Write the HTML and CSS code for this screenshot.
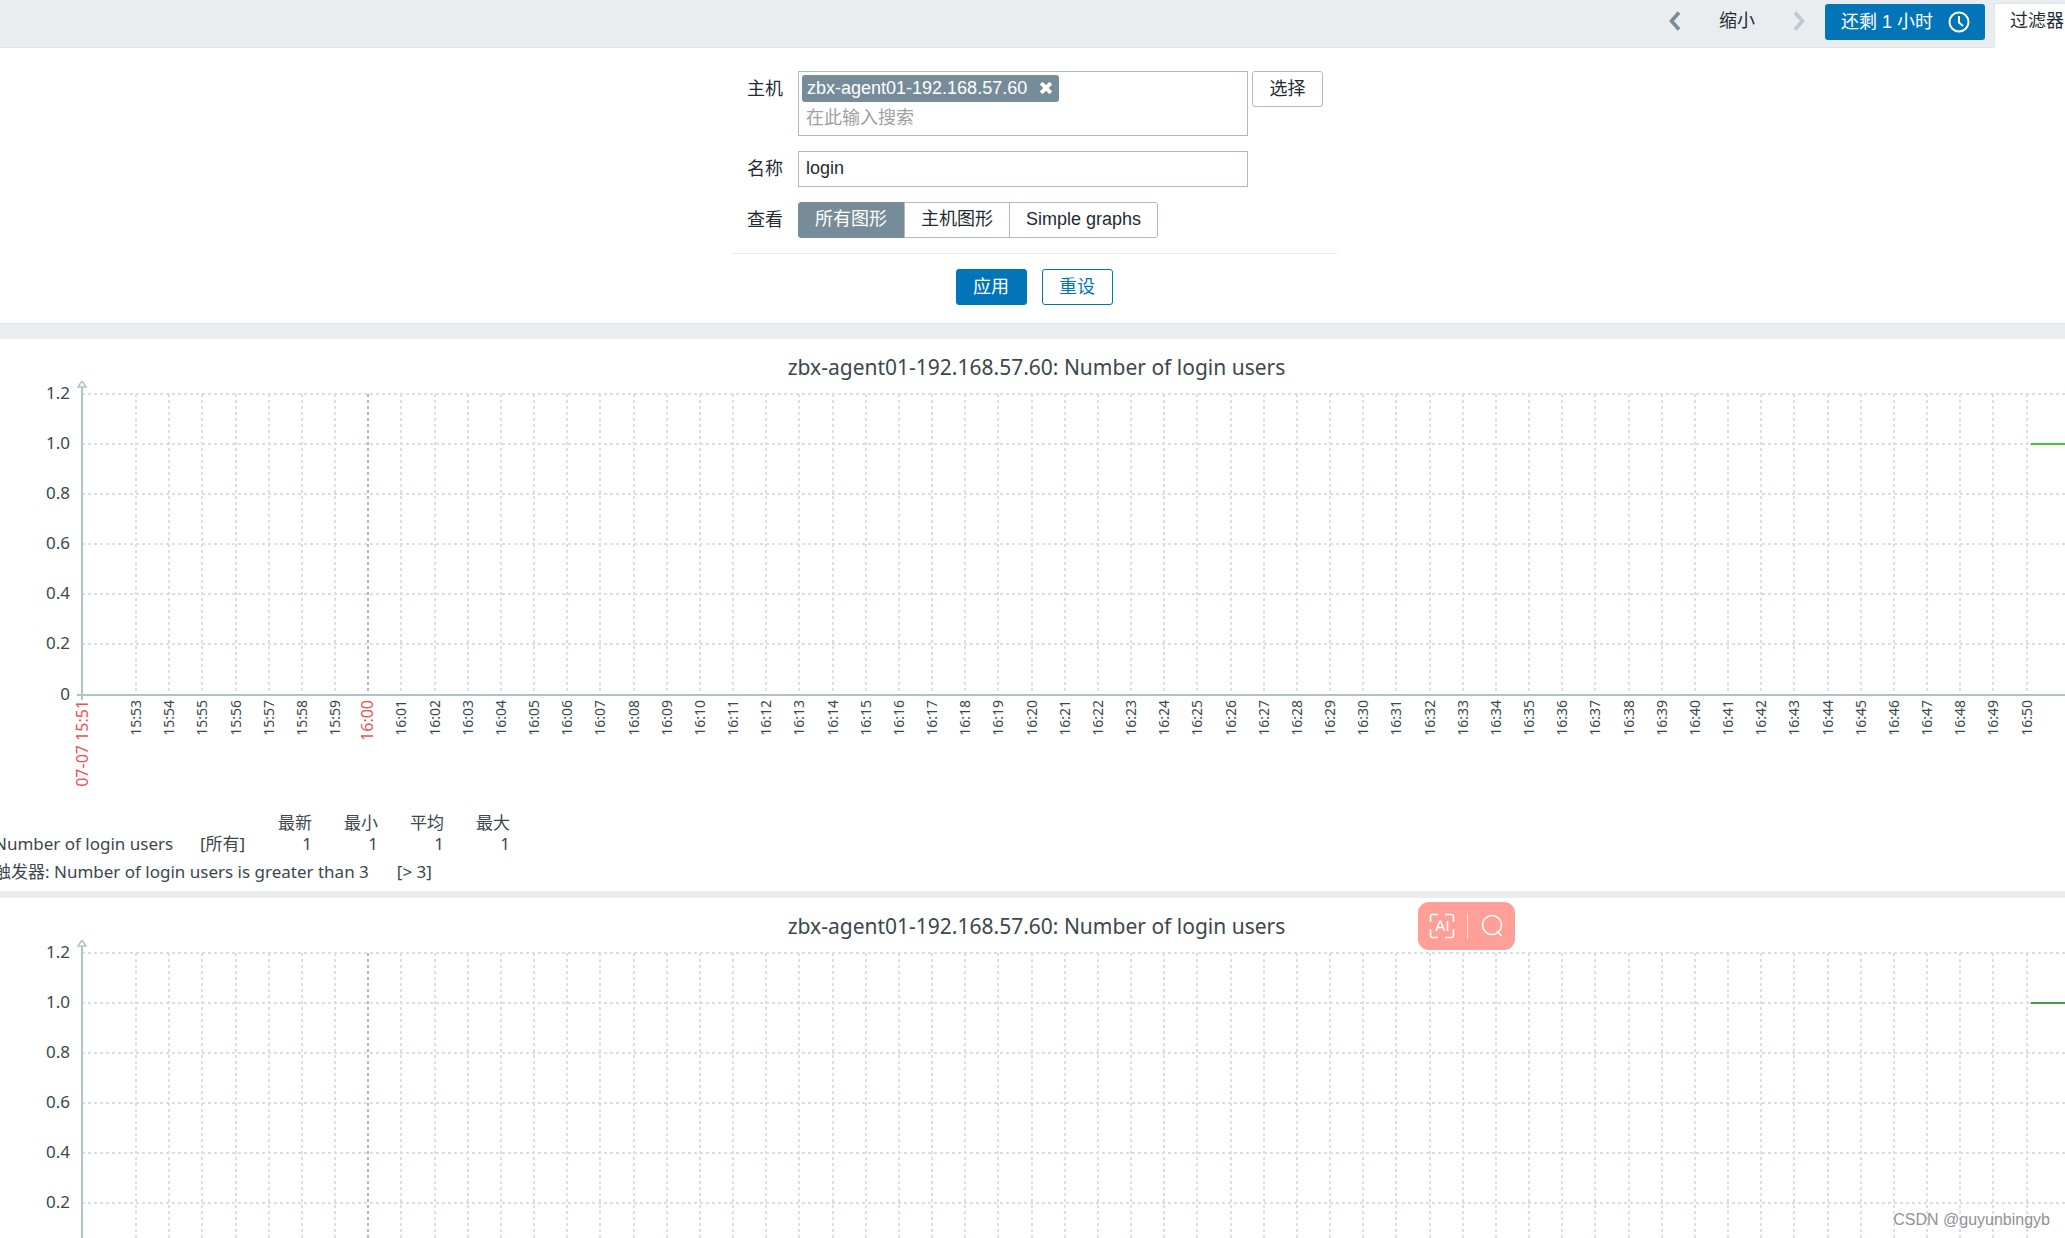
FILE: index.html
```html
<!DOCTYPE html>
<html lang="zh-CN">
<head>
<meta charset="utf-8">
<title>图形</title>
<link rel="stylesheet" href="styles.css">
</head>
<body>
<header class="topbar">
  <button class="nav" type="button" aria-label="Previous"><svg width="12" height="20" viewBox="0 0 12 20"><path d="M10 1.5 2.5 10l7.500 8.500" fill="none" stroke="#768d99" stroke-width="3.600"/></svg></button>
  <button class="nav zoom-out" type="button">缩小</button>
  <button class="nav" type="button" aria-label="Next" disabled><svg width="12" height="20" viewBox="0 0 12 20"><path d="M2 1.500 9.500 10 2 18.500" fill="none" stroke="#bfc9cf" stroke-width="3.600"/></svg></button>
  <button class="period" type="button">还剩 1 小时
    <svg width="22" height="22" viewBox="0 0 22 22" fill="none" stroke="#fff" stroke-width="2"><circle cx="11" cy="11" r="9.500"/><path d="M11 5v6.500l4 3.500"/></svg>
  </button>
  <a class="filter-tab" href="#filter">过滤器</a>
</header>

<form class="filter" id="filter">
  <div class="fields">
    <label for="host">主机</label>
    <div class="host-row">
      <div class="multiselect">
        <span class="tag">zbx-agent01-192.168.57.60
          <button type="button" aria-label="Remove"><svg width="14" height="14" viewBox="0 0 13 13"><path d="m2 2 9 9M11 2l-9 9" stroke="#fff" stroke-width="3.600"/></svg></button>
        </span>
        <input id="host" type="text" placeholder="在此输入搜索">
      </div>
      <button class="btn btn-plain" type="button">选择</button>
    </div>
    <label for="name">名称</label>
    <input class="text" id="name" type="text" value="login">
    <span class="label" id="view-label">查看</span>
    <div class="segments" role="radiogroup" aria-labelledby="view-label">
      <label><input type="radio" name="view" checked><span>所有图形</span></label>
      <label><input type="radio" name="view"><span>主机图形</span></label>
      <label><input type="radio" name="view"><span>Simple graphs</span></label>
    </div>
  </div>
  <div class="actions">
    <button class="btn btn-primary" type="button">应用</button>
    <button class="btn btn-outline" type="button">重设</button>
  </div>
</form>

<main>
  <section class="panel">
    <h2>zbx-agent01-192.168.57.60: Number of login users</h2>
    <svg class="chart" data-color="#33cc33"></svg>
    <table class="legend">
      <thead><tr><td></td><td></td><th>最新</th><th>最小</th><th>平均</th><th>最大</th></tr></thead>
      <tbody><tr><td class="item">Number of login users</td><td class="scope">[所有]</td><td>1</td><td>1</td><td>1</td><td>1</td></tr></tbody>
    </table>
    <p class="trigger"><span>触发器: Number of login users is greater than 3</span><span>[&gt; 3]</span></p>
  </section>
  <section class="panel">
    <h2>zbx-agent01-192.168.57.60: Number of login users</h2>
    <svg class="chart" data-color="#429e47"></svg>
  </section>
</main>

<div class="assistant">
  <button type="button" aria-label="AI"><svg width="26" height="26" viewBox="0 0 26 26" fill="none" stroke="#fff" stroke-width="1.600"><path d="M1.500 9V3.500q0-2 2-2H9M16 1.500h6.500q2 0 2 2V9M24.500 16v6.500q0 2-2 2H16M9 24.500H3.500q-2 0-2-2V16"/><path d="m7 18 4-10h.5l4 10M8.500 14.500h6M18.500 8v10"/></svg></button>
  <button class="search" type="button" aria-label="Search"><svg width="24" height="26" viewBox="0 0 24 26" fill="none" stroke="#fff" stroke-width="1.600"><circle cx="12" cy="12" r="9.500"/><path d="m17 18 4.500 5"/></svg></button>
</div>
<div class="watermark">CSDN @guyunbingyb</div>
<script src="chart.js"></script>
</body>
</html>
```
FILE: styles.css
```css
* { box-sizing: border-box; }
body {
  margin: 0;
  height: 100vh;
  overflow: hidden;
  position: relative;
  background: #e9edf0;
  color: #1f2c33;
  font: 18px/24px "Liberation Sans", "Noto Sans CJK SC", sans-serif;
}
button, input { font: inherit; color: inherit; }
button { padding: 0; border: 0; background: none; }
svg { display: block; }

.topbar {
  position: relative;
  display: flex;
  justify-content: flex-end;
  align-items: flex-start;
  height: 48px;
  overflow: hidden;
}
.nav { display: flex; align-items: center; height: 42px; }
.zoom-out { margin: 0 38px; }
.period {
  display: flex;
  align-items: center;
  justify-content: space-between;
  width: 160px;
  height: 36px;
  margin: 4px 9px 0 20px;
  padding: 0 15px 0 16px;
  border-radius: 3px;
  background: #0275b8;
  color: #fff;
}
.filter-tab {
  width: 71px;
  height: 45px;
  margin-top: 3px;
  padding: 5px 0 0 15px;
  border: 1px solid #dfe4e7;
  border-width: 1px 0 0 1px;
  background: #fff;
  color: inherit;
  text-decoration: none;
  white-space: nowrap;
}

.filter {
  display: flex;
  flex-direction: column;
  align-items: center;
  height: 277px;
  margin-top: -1px;
  padding: 23px 0 0 5px;
  border: 1px solid #dfe4e7;
  border-width: 1px 0;
  background: #fff;
}
.fields {
  display: grid;
  grid-template-columns: 36px 526px;
  column-gap: 15px;
  row-gap: 15px;
  width: 606px;
  padding: 0 0 15px 15px;
  border-bottom: 1px solid #ebeef0;
}
.fields > label, .label { padding-top: 6px; }
.host-row { display: flex; align-items: flex-start; gap: 4px; }
.multiselect {
  width: 450px;
  height: 65px;
  padding: 3px;
  border: 1px solid #acbbc2;
}
.tag {
  display: flex;
  align-items: center;
  justify-content: space-between;
  width: 257px;
  height: 27px;
  padding: 0 6px 2px 5px;
  border-radius: 3px;
  background: #768d99;
  color: #fff;
}
.multiselect input { width: 100%; height: 32px; padding: 0 4px; border: 0; outline: 0; background: none; }
::placeholder { color: #a0a0a0; opacity: 1; }
.text { width: 450px; height: 36px; padding: 0 7px 1px; border: 1px solid #acbbc2; }
.btn { width: 71px; height: 36px; border: 1px solid #acbbc2; border-radius: 3px; }
.btn-primary { border-color: #0275b8; background: #0275b8; color: #fff; }
.btn-outline { border-color: #0275b8; color: #0275b8; }
.segments { display: flex; height: 36px; }
.segments input { position: absolute; opacity: 0; }
.segments span {
  display: block;
  height: 36px;
  margin-right: -1px;
  padding: 4px 16px;
  border: 1px solid #acbbc2;
}
.segments label:first-child span { margin-right: 0; border-radius: 3px 0 0 3px; }
.segments label:last-child span { border-radius: 0 3px 3px 0; }
.segments input:checked + span { border-color: #768d99; background: #768d99; color: #fff; }
.actions { display: flex; gap: 15px; padding: 15px 2px 0 0; }

main { display: flex; flex-direction: column; gap: 7px; padding-top: 15px; }
.panel {
  height: 552px;
  overflow: hidden;
  background: #fff;
  color: #3c474d;
  font: 17px/22px "Noto Sans", "Noto Sans CJK SC", sans-serif;
}
.panel h2 {
  margin: 0;
  padding: 14px 0 0 8px;
  font-size: 21px;
  line-height: 28px;
  font-weight: 400;
  text-align: center;
}
.chart { width: 100%; height: 431px; overflow: hidden; }
.grid { stroke: #d8e0e3; stroke-width: 2; stroke-dasharray: 3 3; }
.grid-hour { stroke: #acbbc2; }
.axis { stroke: #b3c2c9; stroke-width: 2; fill: #fff; }
.tick { fill: #3c474d; font-size: 17px; }
.minute { font-size: 14px; }
.hour { fill: #f24f4f; font-size: 16px; }
.legend { margin-left: -6px; border-collapse: collapse; }
.legend th, .legend td { width: 66px; height: 21px; padding: 0; line-height: 20px; font-weight: 400; text-align: right; }
.legend td:first-child { width: 206px; text-align: left; }
.legend td:nth-child(2) { width: 46px; text-align: left; white-space: nowrap; }
.trigger { display: flex; gap: 28px; margin: 7px 0 0 -6px; }

.assistant {
  position: absolute;
  top: 902px;
  right: 550px;
  display: flex;
  align-items: center;
  justify-content: space-between;
  width: 97px;
  height: 48px;
  padding: 0 11px;
  border-radius: 11px;
  background: #ff9f98;
}
.search { padding-left: 12px; border-left: 1px solid #ffe0dd; }
.watermark { position: absolute; right: 15px; bottom: 6px; color: #8f9294; font-size: 16px; }
```
FILE: chart.js
```js
const NS = 'http://www.w3.org/2000/svg';
const LEFT = 82, TOP = 13, BOTTOM = 314;

function add(svg, name, attrs, text) {
  const el = document.createElementNS(NS, name);
  for (const key in attrs) el.setAttribute(key, attrs[key]);
  if (text) el.textContent = text;
  svg.append(el);
}

function vertical(svg, x, cls, text) {
  add(svg, 'text', { class: 'tick ' + cls, 'text-anchor': 'end', transform: `translate(${x} ${BOTTOM + 5}) rotate(-90)` }, text);
}

function draw(svg) {
  svg.replaceChildren();
  const width = svg.clientWidth;
  const step = (width + 7 - LEFT) / 60;
  for (let i = 0; i <= 6; i++) {
    const y = Math.floor(BOTTOM - (BOTTOM - TOP) * i / 6);
    if (i) add(svg, 'line', { class: 'grid', x1: LEFT, x2: width, y1: y, y2: y });
    add(svg, 'text', { class: 'tick', x: 70, y: y + 5, 'text-anchor': 'end' }, i ? (i / 5).toFixed(1) : '0');
  }
  for (let m = 53; m <= 110; m++) {
    const x = Math.round(LEFT + (m - 51.37) * step);
    const hour = m % 60 === 0;
    const label = (15 + Math.floor(m / 60)) + ':' + String(m % 60).padStart(2, '0');
    add(svg, 'line', { class: hour ? 'grid grid-hour' : 'grid', x1: x, x2: x, y1: TOP, y2: BOTTOM });
    vertical(svg, x + 5, hour ? 'hour' : 'minute', label);
  }
  add(svg, 'path', { class: 'axis', d: `M${LEFT} 5V${BOTTOM + 5}M${LEFT - 5} ${BOTTOM}H${width}` });
  add(svg, 'path', { class: 'axis', style: 'stroke-width:1.5', d: `M${LEFT} 0l-4 6h8z` });
  vertical(svg, LEFT + 6, 'hour', '07-07 15:51');
  vertical(svg, width + 13, 'hour', '07-07 16:51');
  const x = LEFT + 58.75 * step;
  add(svg, 'line', { x1: x, x2: width, y1: 63, y2: 63, stroke: svg.dataset.color, 'stroke-width': 2 });
}

const charts = document.querySelectorAll('.chart');
const drawAll = () => charts.forEach(draw);
drawAll();
addEventListener('resize', drawAll);
```
